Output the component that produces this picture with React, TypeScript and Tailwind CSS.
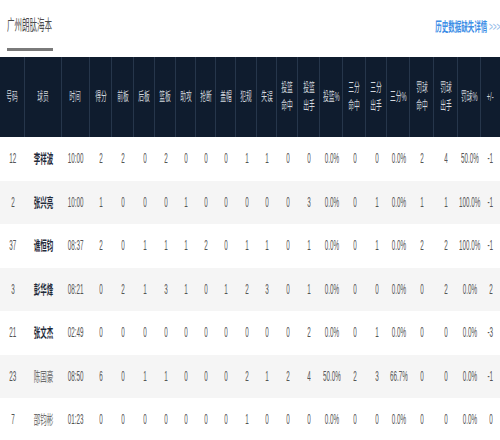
const heads = [
  ["号码"], ["球员"], ["时间"], ["得分"], ["前板"], ["后板"], ["篮板"], ["助攻"], ["抢断"], ["盖帽"], ["犯规"], ["失误"],
  ["投篮", "命中"], ["投篮", "出手"], ["投篮%"], ["三分", "命中"], ["三分", "出手"], ["三分%"],
  ["罚球", "命中"], ["罚球", "出手"], ["罚球%"], ["+/-"],
];

const rows: { name: string; starter: boolean; cells: string[] }[] = [
  { name: "李祥波", starter: true, cells: ["12", "", "10:00", "2", "2", "0", "2", "0", "0", "0", "1", "1", "0", "0", "0.0%", "0", "0", "0.0%", "2", "4", "50.0%", "-1"] },
  { name: "张兴亮", starter: true, cells: ["2", "", "10:00", "1", "0", "0", "0", "1", "0", "0", "0", "0", "0", "3", "0.0%", "0", "1", "0.0%", "1", "1", "100.0%", "-1"] },
  { name: "谯恒钧", starter: true, cells: ["37", "", "08:37", "2", "0", "1", "1", "1", "2", "0", "1", "1", "0", "1", "0.0%", "0", "1", "0.0%", "2", "2", "100.0%", "-1"] },
  { name: "彭华烽", starter: true, cells: ["3", "", "08:21", "0", "2", "1", "3", "1", "0", "1", "2", "3", "0", "1", "0.0%", "0", "0", "0.0%", "0", "2", "0.0%", "2"] },
  { name: "张文杰", starter: true, cells: ["21", "", "02:49", "0", "0", "0", "0", "0", "0", "0", "0", "0", "0", "2", "0.0%", "0", "1", "0.0%", "0", "0", "0.0%", "-3"] },
  { name: "陈国豪", starter: false, cells: ["23", "", "08:50", "6", "0", "1", "1", "0", "0", "0", "2", "1", "2", "4", "50.0%", "2", "3", "66.7%", "0", "0", "0.0%", "-1"] },
  { name: "邵钧彬", starter: false, cells: ["7", "", "01:23", "0", "0", "0", "0", "0", "0", "0", "1", "0", "0", "0", "0.0%", "0", "0", "0.0%", "0", "0", "0.0%", "0"] },
];

const font = { fontFamily: '"Liberation Sans", "Noto Sans CJK SC", sans-serif' };

export default function App() {
  return (
    <div className="w-[500px] h-[440px] overflow-hidden bg-white" style={font}>
      {/* title bar */}
      <div className="flex h-[57px] items-start justify-between">
        <div className="pl-[7px] pt-[13px]">
          <div className="w-[46px] overflow-visible whitespace-nowrap">
            <span className="inline-block origin-left scale-x-[0.5] text-[15px] leading-[18px] text-[#4a4a4a]">广州朗肽海本</span>
          </div>
          <div className="mt-[11px] h-[3px] w-[46px] bg-[#7a7a7a]" />
        </div>
        <div className="pt-[14px]">
          <span className="inline-block origin-right scale-x-[0.5] whitespace-nowrap text-[13px] font-bold leading-[16px] text-[#3d8ee6]">
            历史数据缺失详情 <span className="font-normal text-[#8fb8e8]">&gt;&gt;&gt;</span>
          </span>
        </div>
      </div>

      {/* table header */}
      <div className="grid h-[80px] grid-cols-[25px_37px_28px_22px_22px_21px_21px_20px_20px_20px_21px_20px_21px_22px_23px_23px_21px_23px_24px_24px_23px_19px] bg-[#0f1c2e]">
        {heads.map((h, i) => (
          <div key={i} className="flex flex-col items-center justify-center border-r border-[#26364b] last:border-r-0">
            {h.map((t) => (
              <span key={t} className="inline-block scale-x-[0.48] whitespace-nowrap text-[12px] leading-[18px] text-[#d3d8df]">
                {t}
              </span>
            ))}
          </div>
        ))}
      </div>

      {/* rows */}
      {rows.map((r, ri) => (
        <div
          key={ri}
          className={
            "grid h-[43.5px] grid-cols-[25px_37px_28px_22px_22px_21px_21px_20px_20px_20px_21px_20px_21px_22px_23px_23px_21px_23px_24px_24px_23px_19px] " +
            (ri % 2 === 1 ? "bg-[#f5f5f5]" : "bg-white")
          }
        >
          {r.cells.map((c, ci) => (
            <div key={ci} className="flex items-center justify-center">
              {ci === 1 ? (
                <span
                  className={
                    "inline-block scale-x-[0.5] whitespace-nowrap text-[13px] " +
                    (r.starter ? "font-bold text-[#1f2a3a]" : "text-[#6b6b6b]")
                  }
                >
                  {r.name}
                </span>
              ) : (
                <span className="inline-block scale-x-[0.45] whitespace-nowrap text-[14px] text-[#555]">{c}</span>
              )}
            </div>
          ))}
        </div>
      ))}
    </div>
  );
}
